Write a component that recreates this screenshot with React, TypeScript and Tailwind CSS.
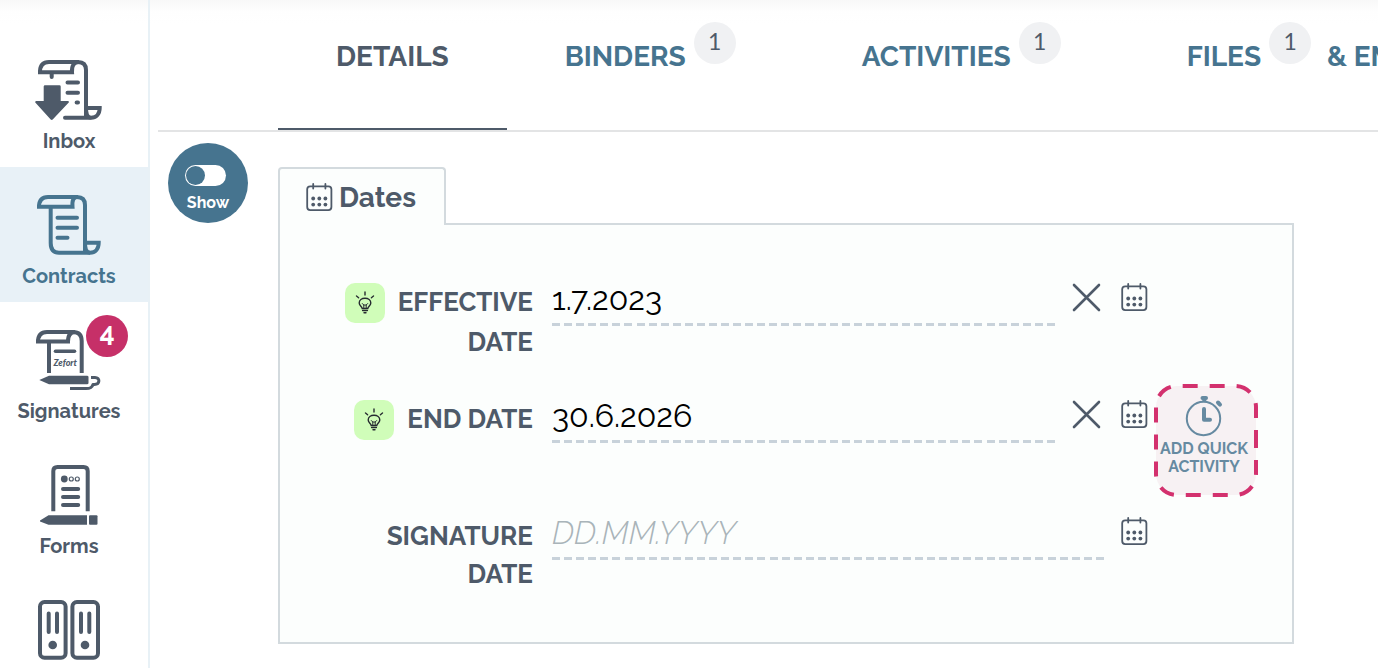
import type { ReactNode } from "react";

const InboxIcon = () => (
    <svg viewBox="0 0 68 62" className="h-[62px] w-[68px]" fill="none" stroke="currentColor" strokeWidth="4" strokeLinecap="round">
        <path d="M5 13C5 6 8 3 14 3H43Q51 3 51 11V58" strokeLinecap="butt" />
        <path d="M3 13.2H37C36.5 6.500 39 3 44 3" strokeLinecap="butt" />
        <path d="M16.700 14V18M32.500 23.600H43M32.500 33.700H43M41.600 43.600H43" />
        <path d="M30 58.700H55" />
        <path d="M51 49H64.700C64.700 55 61 58.700 56 58.700C52 58.700 51 55 51 49Z" />
        <path d="M8.700 27.500Q8.700 26.300 10 26.300H24.500Q25.700 26.300 25.700 27.500V42H33Q34.500 42.500 33.500 43.800L17.700 60.500Q16.700 61.300 15.700 60.500L.5 43.800Q-.3 42.500 1 42H8.700Z" fill="currentColor" stroke="none" />
    </svg>
);

const ContractsIcon = () => (
    <svg viewBox="0 0 68 62" className="h-[62px] w-[68px]" fill="none" stroke="currentColor" strokeWidth="4" strokeLinecap="round">
        <path d="M4 13C4 6 7 3 13 3H42Q50 3 50 11V57" strokeLinecap="butt" />
        <path d="M2 12.800H37.500C37 6.500 38 3 43 3" strokeLinecap="butt" />
        <path d="M15.700 14V49Q15.700 58.700 24 58.700H55" strokeLinecap="butt" />
        <path d="M50 48.700H63.700C63.700 55 60 58.700 55 58.700C51 58.700 50 55 50 48.700Z" />
        <path d="M22.500 23.700H42M22.500 33.700H42M22.500 43.700H32.500" />
    </svg>
);

const SignaturesIcon = () => (
    <svg viewBox="0 0 68 62" className="h-[62px] w-[68px]" fill="none" stroke="currentColor" strokeWidth="4">
        <path d="M3 13C3 6 6 3 12 3H38Q46.700 3 46.700 12V44" />
        <path d="M1 12.500H33C33 6.500 35 3 40 3M14 13V44" />
        <path d="M20.500 22.300H39.500" strokeLinecap="round" strokeWidth="3.600" />
        <text x="18.500" y="37" fill="currentColor" stroke="none" className="font-[Lato] text-[9px] font-black italic">Zefort</text>
        <path d="M4.300 51L14 46.700H52Q53.500 46.700 53.500 48V54Q53.500 55.300 52 55.300H14Z" fill="currentColor" stroke="none" />
        <path d="M56 48.500H60C65.500 48.500 65 55.500 59.500 55.500H58C57 59 55 59.500 51 59.500H35" strokeWidth="3" strokeLinejoin="round" />
    </svg>
);

const FormsIcon = () => (
    <svg viewBox="0 0 68 62" className="h-[62px] w-[68px]" fill="none" stroke="currentColor" strokeWidth="4">
        <path d="M18.300 47.300V7Q18.300 3 22.500 3H48.500Q52.700 3 52.700 7V47.300" />
        <path d="M28 25H43.200M28 33H43.200M28 41H43.200" strokeLinecap="round" />
        <circle cx="29.300" cy="15" r="3.400" fill="currentColor" stroke="none" />
        <circle cx="36.300" cy="15" r="2" strokeWidth="1.200" />
        <circle cx="42.300" cy="15" r="2" strokeWidth="1.200" />
        <path d="M5 56.500L13.500 51.300H52V60.700H13.500L5 57.500Z" fill="currentColor" stroke="none" />
        <rect x="54" y="51.300" width="8.500" height="9.400" rx="1" fill="currentColor" stroke="none" />
    </svg>
);

const BindersIcon = () => (
    <svg viewBox="0 0 68 62" className="h-[62px] w-[68px]" fill="none" stroke="currentColor" strokeWidth="4">
        <rect x="5" y="3" width="25.600" height="55.700" rx="4.500" />
        <rect x="37.400" y="3" width="25.600" height="55.700" rx="4.500" />
        <path d="M13.700 14.500V33M22 14.500V33M46 14.500V33M54.300 14.500V33" strokeLinecap="round" />
        <g fill="currentColor" stroke="none">
            <circle cx="17.700" cy="46" r="4.300" />
            <circle cx="50" cy="46" r="4.300" />
        </g>
    </svg>
);

const CalendarIcon = () => (
    <svg viewBox="0 0 27 29" className="h-[29px] w-[27px]" fill="none" stroke="currentColor" strokeWidth="1.800" strokeLinecap="round">
        <rect x="1.200" y="3.300" width="24.200" height="23.800" rx="3" />
        <path d="M7.200 1V5.500M19.400 1V5.500" />
        <g fill="currentColor" stroke="none">
            <circle cx="7.200" cy="15.500" r="1.900" />
            <circle cx="13.300" cy="15.500" r="1.900" />
            <circle cx="19.400" cy="15.500" r="1.900" />
            <circle cx="7.200" cy="21.600" r="1.900" />
            <circle cx="13.300" cy="21.600" r="1.900" />
            <circle cx="19.400" cy="21.600" r="1.900" />
        </g>
    </svg>
);

const BulbIcon = () => (
    <svg viewBox="0 0 20 24" className="h-6 w-5" fill="none" stroke="#262b30" strokeWidth="1.400" strokeLinecap="round">
        <path d="M10 1V4M1.500 5L3.600 6.700M18.500 5L16.400 6.700" />
        <path d="M7.200 17.500C7 15.500 4.200 14.700 4.200 12C4.200 9 6.800 7.200 10 7.200S15.800 9 15.800 12C15.800 14.700 13 15.500 12.800 17.500Z" />
        <path d="M8.800 17V14L7.300 12.500M11.200 17V14L12.700 12.500M8.800 14H11.200" strokeWidth="1" />
        <path d="M7.600 19.500H12.400M9 21.700H11" />
    </svg>
);

const StopwatchIcon = () => (
    <svg viewBox="0 0 38 42" className="h-[42px] w-[38px]" fill="none" stroke="currentColor" strokeWidth="2">
        <circle cx="18.500" cy="23.500" r="16.700" />
        <path d="M19 14V24.700H25" strokeWidth="4" strokeLinecap="round" strokeLinejoin="round" />
        <path d="M17.500 3H21" strokeWidth="4" strokeLinecap="round" />
        <path d="M19.300 3V7" strokeWidth="4" />
        <path d="M33 7.500L35 9.600" strokeWidth="4" strokeLinecap="round" />
    </svg>
);

const menu = [
    { label: "Inbox", icon: <InboxIcon /> },
    { label: "Contracts", icon: <ContractsIcon />, active: true },
    { label: "Signatures", icon: <SignaturesIcon />, count: 4 },
    { label: "Forms", icon: <FormsIcon /> },
    { label: "Binders", icon: <BindersIcon /> },
];

const tabs = [
    { label: "DETAILS", active: true },
    { label: "BINDERS", count: 1 },
    { label: "ACTIVITIES", count: 1 },
    { label: "FILES", count: 1, rest: "& EMAILS" },
];

const Sidebar = () => (
    <nav className="w-[150px] shrink-0 border-r-2 border-[#e8f1f6] pt-8">
        {menu.map((item) => (
            <a
                key={item.label}
                href="#"
                className={`relative flex h-[135px] flex-col items-center pt-[27px] pr-[10px] ${item.active ? "bg-[#e8f1f7] text-[#46748f]" : "text-[#4e5a69]"}`}
            >
                {item.icon}
                <span className="mt-[6px] text-[20px] leading-7 font-bold">{item.label}</span>
                {item.count && (
                    <span className="absolute top-[13px] left-[86px] flex size-[42px] items-center justify-center rounded-full bg-[#c63068] text-[26px] font-bold text-white lining-nums">
                        {item.count}
                    </span>
                )}
            </a>
        ))}
    </nav>
);

const Tabs = () => (
    <nav className="ml-2 flex border-b-2 border-[#e3e4e5] pl-[120px] text-[28px] font-bold whitespace-nowrap">
        {tabs.map((tab) => (
            <a
                key={tab.label}
                href="#"
                className={`flex h-[130px] shrink-0 items-start border-b-2 px-[58px] pt-[22px] ${tab.active ? "border-[#4e5a69] text-[#4e5a69]" : "border-transparent text-[#46748f]"}`}
            >
                <span className="mt-[21px] leading-7">{tab.label}</span>
                {tab.count && (
                    <span className="mr-[10px] ml-2 flex size-[42px] items-center justify-center rounded-full bg-[#f0f1f3] pb-[3px] font-[Lato] text-[23px] font-normal text-[#4e5a69]">
                        {tab.count}
                    </span>
                )}
                {tab.rest && <span className="mt-[21px] ml-[6px] leading-7">{tab.rest}</span>}
            </a>
        ))}
    </nav>
);

type DateRowProps = {
    id: string;
    label: string;
    value?: string;
    hint?: boolean;
    children?: ReactNode;
};

const DateRow = ({ id, label, value, hint, children }: DateRowProps) => (
    <div className="flex min-h-[117px] items-start text-[#4e5a69] last:min-h-0">
        <div className={`w-[201px] shrink-0 text-right text-[26px] font-bold ${hint ? "leading-[39px]" : "leading-[38px]"}`}>
            {hint && (
                <button aria-label="Suggestion" className="mr-[13px] inline-flex size-10 items-center justify-center rounded-[10px] bg-[#d0fdb9] align-top">
                    <BulbIcon />
                </button>
            )}
            <label htmlFor={id}>{label}</label>
        </div>
        <input
            id={id}
            defaultValue={value}
            placeholder="DD.MM.YYYY"
            className={`ml-[19px] h-[43px] min-w-0 flex-1 bg-[length:100%_3px] bg-bottom bg-no-repeat pb-3 text-[32px] leading-8 text-black outline-none placeholder:font-light placeholder:text-[#a9b4b9] placeholder:italic ${value ? "bg-[repeating-linear-gradient(90deg,#c8d2da_0_8px,transparent_8px_calc(100%/42))]" : "bg-[repeating-linear-gradient(90deg,#c8d2da_0_8px,transparent_8px_calc(100%/46))]"}`}
        />
        {value && (
            <button aria-label="Clear date" className="flex w-[45px] justify-end pr-[3px]">
                <svg viewBox="0 0 29 29" className="size-[29px]" stroke="currentColor" strokeWidth="2.600" strokeLinecap="round">
                    <path d="M2 2L27 27M27 2L2 27" />
                </svg>
            </button>
        )}
        <button aria-label="Pick date" className={value ? "ml-[17px]" : "ml-[13px]"}>
            <CalendarIcon />
        </button>
        <div className="ml-[6px] w-[104px] shrink-0">{children}</div>
    </div>
);

const QuickActivity = () => (
    <button className="relative -mt-4 flex h-[113px] w-full flex-col items-center pt-[11px] pr-1 text-[16px] leading-[18px] font-bold text-[#668aa1]">
        <svg viewBox="0 0 104 113" className="absolute inset-0 -z-10" fill="#f7f1f3" stroke="#d3316e" strokeWidth="4">
            <path d="M102 49V90A21 21 0 0 1 81 111H23A21 21 0 0 1 2 90V23A21 21 0 0 1 23 2H81A21 21 0 0 1 102 23Z" strokeDasharray="15 12" />
        </svg>
        <StopwatchIcon />
        <span className="mt-[3px] w-[96px]">ADD QUICK ACTIVITY</span>
    </button>
);

const DatesCard = () => (
    <section className="isolate mt-[35px] mr-[84px] ml-[30px] flex-1">
        <h2 className="relative z-10 -mb-[2px] flex h-[58px] w-fit items-center gap-[6px] rounded-t-[4px] border-2 border-b-0 border-[#d3dade] bg-[#fcfefd] pt-px pr-7 pl-[26px] text-[28px] font-bold text-[#4e5a69]">
            <CalendarIcon />
            Dates
        </h2>
        <div className="isolate border-2 border-[#d3dade] bg-[#fcfefd] pt-[58px] pr-[34px] pb-[49px] pl-[52px]">
            <DateRow id="effective-date" label="EFFECTIVE DATE" value="1.7.2023" hint />
            <DateRow id="end-date" label="END DATE" value="30.6.2026" hint>
                <QuickActivity />
            </DateRow>
            <DateRow id="signature-date" label="SIGNATURE DATE" />
        </div>
    </section>
);

const App = () => {
    return (
        <div className="flex h-screen overflow-hidden bg-[linear-gradient(#f8f8f8,#fefefe_12px,#ffffff_24px)] font-[Raleway,Lato,sans-serif]">
            <Sidebar />
            <main className="min-w-0 flex-1 overflow-hidden">
                <Tabs />
                <div className="flex items-start">
                    <button className="mt-[11px] ml-[18px] flex size-20 shrink-0 flex-col items-center rounded-full bg-[#46748f] pt-[22px] text-[16px] leading-5 font-bold text-white">
                        <span className="mr-[5px] flex h-[21px] w-[41px] items-center rounded-full bg-white p-px">
                            <span className="size-[19px] rounded-full bg-[#46748f]" />
                        </span>
                        <span className="mt-[7px]">Show</span>
                    </button>
                    <DatesCard />
                </div>
            </main>
        </div>
    );
};

export default App;
